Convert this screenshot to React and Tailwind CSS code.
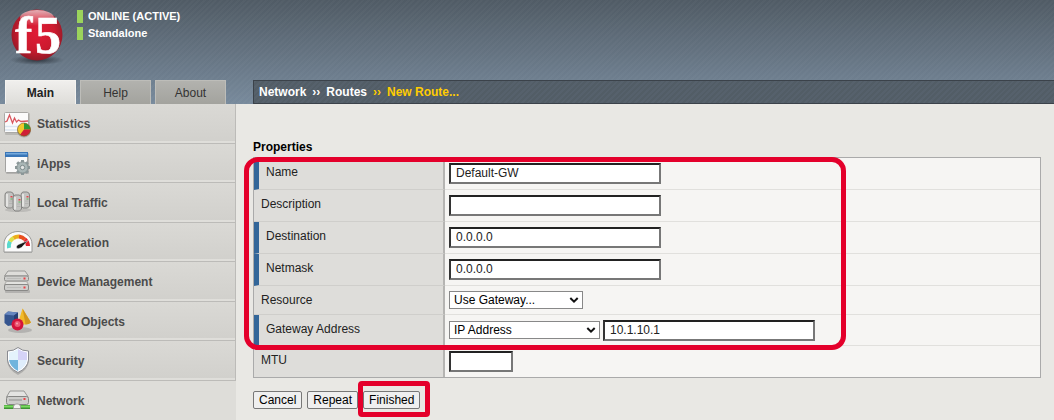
import React from "react";

const navItems = [
  { label: "Statistics", Icon: StatisticsIcon },
  { label: "iApps", Icon: AppsIcon },
  { label: "Local Traffic", Icon: TrafficIcon },
  { label: "Acceleration", Icon: GaugeIcon },
  { label: "Device Management", Icon: DeviceIcon },
  { label: "Shared Objects", Icon: ShapesIcon },
  { label: "Security", Icon: ShieldIcon },
  { label: "Network", Icon: NetworkIcon, active: true },
];

function IconFrame({ children }) {
  return (
    <svg className="h-[30px] w-[30px] shrink-0" viewBox="0 0 30 30" aria-hidden="true">
      {children}
    </svg>
  );
}

function StatisticsIcon() {
  return (
    <IconFrame>
      <rect x="2" y="4" width="25" height="22" rx="1" fill="#8b8b88" opacity=".35" />
      <rect x="1.5" y="3.5" width="24" height="20" rx="1" fill="#fbfbfb" stroke="#aaa9a6" />
      <path d="M2 17.500H25M2 21H25" stroke="#dbe6f1" strokeWidth="1.500" />
      <path d="M2 13 4 12 6.500 6 9.500 14 11.500 9 13.500 13 15.500 11 18 12.500 25 12" fill="none" stroke="#d9565e" strokeWidth="1.300" />
      <circle cx="21" cy="21.500" r="7" fill="#777" opacity=".45" />
      <circle cx="21" cy="20.500" r="6.500" fill="#f0c92b" />
      <path d="M21 20.500V14A6.500 6.500 0 0 1 27.500 20.500Z" fill="#2e9a35" />
      <path d="M21 20.500H27.500A6.500 6.500 0 0 1 17 25.700Z" fill="#cf1f36" />
      <circle cx="21" cy="20.500" r="6.500" fill="none" stroke="#7c5a20" strokeWidth=".6" />
    </IconFrame>
  );
}

function AppsIcon() {
  return (
    <IconFrame>
      <rect x="3" y="4" width="23" height="21" rx="1" fill="#777" opacity=".35" />
      <rect x="2.500" y="3.500" width="22" height="20" rx="1" fill="#fafafa" stroke="#a2a2a0" />
      <rect x="2" y="3" width="23" height="5" fill="#3976b8" />
      <rect x="3" y="4" width="21" height="1.500" fill="#76aadc" />
      <g transform="translate(19.500 18.500)">
        <g stroke="#8c9899" strokeWidth="3">
          <path d="M0-7.500V7.500" />
          <path d="M0-7.500V7.500" transform="rotate(45)" />
          <path d="M0-7.500V7.500" transform="rotate(90)" />
          <path d="M0-7.500V7.500" transform="rotate(135)" />
        </g>
        <circle r="5.600" fill="#a9b6b6" stroke="#879394" />
        <circle r="2.200" fill="#e3e5e4" stroke="#7d8a8b" />
      </g>
    </IconFrame>
  );
}

function Tower({ x, y }) {
  return (
    <g transform={`translate(${x} ${y})`}>
      <path d="M0 3Q0 .500 2 0H6Q8.500 .500 8.500 3V14L6.500 16H2L0 14Z" fill="#c3c3c1" stroke="#858583" />
      <path d="M2 2V14.500" stroke="#efefed" strokeWidth="1.500" />
      <path d="M4 9H7.500M4 11.500H7.500" stroke="#b4b4b2" />
      <rect x="5.500" y="4" width="2" height="1.500" fill="#e14a4c" />
      <rect x="5.500" y="6.500" width="2" height="1" fill="#58b954" />
    </g>
  );
}

function TrafficIcon() {
  return (
    <IconFrame>
      <ellipse cx="15" cy="22" rx="13" ry="2" fill="#777" opacity=".25" />
      <Tower x={2} y={4} />
      <Tower x={18} y={4} />
      <Tower x={10} y={7} />
    </IconFrame>
  );
}

function GaugeIcon() {
  return (
    <IconFrame>
      <path d="M1 25V18A14 14 0 0 1 29 18V25Z" fill="#777" opacity=".3" />
      <path d="M1 24V16C1 9 7 3.500 15 3.500S29 9 29 16V24Z" fill="#fafafa" stroke="#9a9a98" />
      <g fill="none" strokeWidth="4">
        <path d="M6 20A9.500 9.500 0 0 1 7 13.500" stroke="#59d9cd" />
        <path d="M7 13.500A9.500 9.500 0 0 1 10.500 10" stroke="#dbe04a" />
        <path d="M10.500 10A9.500 9.500 0 0 1 16 8.500" stroke="#edae1c" />
        <path d="M16 8.500A9.500 9.500 0 0 1 22 11.500" stroke="#e8501f" />
        <path d="M22 11.500A9.500 9.500 0 0 1 25 18" stroke="#e5202e" />
      </g>
      <path d="M25 12.500 18.500 19.500Q15.500 21.500 13.500 20Q12.500 18 15.500 16.500Z" fill="#171717" stroke="#fff" strokeWidth=".5" />
    </IconFrame>
  );
}

function DeviceIcon() {
  return (
    <IconFrame>
      <rect x="2" y="23" width="25" height="3" rx="1" fill="#777" opacity=".35" />
      <path d="M5 4H22L25.500 9H1.500Z" fill="#deddda" stroke="#9a9a98" />
      <rect x="1.500" y="9" width="24" height="5" rx="1.500" fill="#cececc" stroke="#898987" />
      <path d="M3.500 14.500H23.500L25.500 17.500H1.500Z" fill="#e2e2df" stroke="#aaa9a6" />
      <rect x="1.500" y="17.500" width="24" height="6" rx="1.500" fill="#cececc" stroke="#898987" />
      <path d="M4 11.500H18M4 20.500H18" stroke="#bcbcba" />
      <rect x="20.500" y="10.500" width="2" height="2" fill="#e94246" />
      <rect x="20.500" y="19.500" width="2" height="2" fill="#e94246" />
    </IconFrame>
  );
}

function ShapesIcon() {
  return (
    <IconFrame>
      <ellipse cx="17" cy="23" rx="12" ry="3" fill="#777" opacity=".35" />
      <path d="M1.500 7.500 5 4.500 15 5.500V17L5 19 1.500 16Z" fill="#35558f" />
      <path d="M1.500 7.500 5 4.500 15 5.500 11 8.500Z" fill="#6686bf" />
      <path d="M11 8.500 15 5.500V17L11 19Z" fill="#253f73" />
      <path d="M19.500 1.500 28 15.500Q25 19 15 16.500Z" fill="#f2ba29" />
      <path d="M19.500 1.500 28 15.500Q26 17.500 22.500 17.500Z" fill="#d3951c" />
      <circle cx="14.500" cy="17.500" r="6" fill="#d4143b" />
      <circle cx="14.500" cy="17" r="3" fill="#eb5873" />
      <circle cx="14" cy="16.500" r="1" fill="#f8a7b3" />
    </IconFrame>
  );
}

function ShieldIcon() {
  return (
    <IconFrame>
      <path d="M4 6Q11 6 15 2Q19 6 26 6V15Q25 24 15 29Q5 24 4 15Z" fill="#777" opacity=".4" />
      <path d="M4.500 5Q11 5 15 1.500Q19 5 25.500 5V14Q24.500 22 15 26.500Q5.500 22 4.500 14Z" fill="#fff" stroke="#898b91" />
      <path d="M6 6.500Q11 6 15 3V14H6Z" fill="#e4f3fc" />
      <path d="M15 3Q19 6 24 6.500V14H15Z" fill="#d5d3f7" />
      <path d="M6 14H15V25Q7 21 6 14Z" fill="#70b4dd" />
      <path d="M15 14H24Q23 21 15 25Z" fill="#dfedfb" />
    </IconFrame>
  );
}

function NetworkIcon() {
  return (
    <IconFrame>
      <path d="M7 5H21L25 11H3.500Z" fill="#e3e3e1" stroke="#999997" />
      <rect x="3.500" y="10.500" width="22" height="8" rx="2" fill="#cdcdcb" stroke="#858583" />
      <path d="M6 14H19" stroke="#8f8f8d" />
      <rect x="20.500" y="12" width="2" height="2" fill="#ed4447" />
      <path d="M1 21H27" stroke="#3e9134" strokeWidth="4" />
      <path d="M1 20.500H27" stroke="#7bdc61" strokeWidth="2" />
      <path d="M10.500 22.500V20L12.500 18H15.500L17.500 20V22.500Z" fill="#f2f2f0" stroke="#a0a09e" />
    </IconFrame>
  );
}

function Logo() {
  return (
    <svg className="h-[70px] w-[64px] shrink-0" viewBox="0 -8 64 70" role="img" aria-label="f5">
      <defs>
        <radialGradient id="ball" cx="50%" cy="45%" r="58%">
          <stop offset="0" stopColor="#e01c36" />
          <stop offset=".6" stopColor="#cc1a2e" />
          <stop offset="1" stopColor="#8a1a26" />
        </radialGradient>
        <linearGradient id="gloss" x1="0" y1="0" x2="0" y2="1">
          <stop offset="0" stopColor="#fff" stopOpacity=".65" />
          <stop offset="1" stopColor="#fff" stopOpacity="0" />
        </linearGradient>
        <radialGradient id="shade">
          <stop offset="0" stopColor="#20262d" stopOpacity=".8" />
          <stop offset="1" stopColor="#20262d" stopOpacity="0" />
        </radialGradient>
      </defs>
      <ellipse cx="32" cy="52" rx="27" ry="5" fill="url(#shade)" />
      <circle cx="32" cy="27" r="25.500" fill="url(#ball)" />
      <ellipse cx="32" cy="10" rx="17" ry="8" fill="url(#gloss)" />
      <g fill="#fff" fontFamily="Liberation Serif, serif" fontWeight="700">
        <text x="10" y="45" fontSize="52" stroke="#fff" strokeWidth=".6">f</text>
        <text x="30" y="45" fontSize="52" stroke="#fff" strokeWidth=".6">5</text>
      </g>
    </svg>
  );
}

function TextField({ id, value = "", size = "w-[212px]", label }) {
  return (
    <input
      id={id}
      aria-label={label}
      type="text"
      defaultValue={value}
      className={`${size} h-[21px] border-2 border-t-[#222] border-l-[#333] border-r-[#777] border-b-[#777] bg-white px-[5px] text-xs text-[#222] outline-none`}
    />
  );
}

function SelectField({ id, option, size }) {
  return (
    <div className={`relative ${size}`}>
      <select id={id} className="block h-[18px] w-full appearance-none border border-[#888] bg-white pl-1 pr-5 text-xs leading-4 text-black outline-none">
        <option>{option}</option>
      </select>
      <svg className="pointer-events-none absolute top-[5px] right-1 h-2 w-2.5" viewBox="0 0 10 8" aria-hidden="true">
        <path d="M1.300 2 5 5.700 8.700 2" fill="none" stroke="#111" strokeWidth="2" />
      </svg>
    </div>
  );
}

function Row({ id, label, required, last, height = "", children }) {
  return (
    <tr className={height}>
      <th
        scope="row"
        className={`w-[191px] border-r-2 border-r-[#b5b4b2] bg-[#dedddA] p-0 pl-[7px] text-left align-top font-normal ${required ? "border-l-[5px] border-l-[#336699]" : ""} ${last ? "" : "border-b border-b-[#cfcecb]"}`}
      >
        <label htmlFor={id} className="block pt-1.5 leading-4">{label}</label>
      </th>
      <td className={`py-0 pr-2 pl-1 align-middle ${last ? "" : "border-b border-[#e1e0dd]"}`}>
        <div className="flex items-center gap-[3px]">{children}</div>
      </td>
    </tr>
  );
}

function FormButton({ children }) {
  return (
    <button type="button" className="block h-[18px] rounded-[2px] border border-[#777] bg-[#efefef] px-[5px] text-xs leading-4 text-black">
      {children}
    </button>
  );
}

export default function App() {
  return (
    <div className="min-h-screen bg-[#e9e8e4] text-xs text-[#222] [font-family:'Liberation_Sans',Arial,sans-serif]">
      <header className="flex h-[104px] flex-col justify-between bg-[repeating-linear-gradient(135deg,rgba(255,255,255,0.025)_0px,rgba(255,255,255,0.025)_2px,transparent_2px,transparent_4px),linear-gradient(#505b65,#788a9c)]">
        <div className="flex pl-[5px]">
          <Logo />
          <div className="flex flex-col gap-1 pt-2.5 pl-2 text-[11px] leading-[13px] font-bold text-white">
            <div className="border-l-[6px] border-[#9bd45c] pl-[5px]">ONLINE (ACTIVE)</div>
            <div className="border-l-[6px] border-[#9bd45c] pl-[5px]">Standalone</div>
          </div>
        </div>
        <div className="flex items-end">
          <div className="flex w-[253px] shrink-0 gap-1 pl-[5px]">
            <button type="button" className="h-6 w-[71px] border border-b-0 border-[#f4f3f0] bg-linear-to-b from-[#f0efed] to-[#deddd9] font-bold">Main</button>
            <button type="button" className="h-6 w-[71px] border border-b-0 border-[#bdbdb9] bg-linear-to-b from-[#b2b2ae] to-[#a3a39e] text-[#333]">Help</button>
            <button type="button" className="h-6 w-[71px] border border-b-0 border-[#bdbdb9] bg-linear-to-b from-[#b2b2ae] to-[#a3a39e] text-[#333]">About</button>
          </div>
          <nav aria-label="Breadcrumb" className="flex h-6 flex-1 items-center gap-1.5 border border-r-0 border-[#3b424a] bg-[repeating-linear-gradient(135deg,#56616c_0px,#56616c_2px,#525d66_2px,#525d66_4px)] pl-[5px] font-bold text-white">
            <a href="#network">Network</a>
            <span>››</span>
            <a href="#routes">Routes</a>
            <span className="text-[#ffcc00]">››</span>
            <a href="#new-route" className="text-[#ffcc00]">New Route...</a>
          </nav>
        </div>
      </header>

      <div className="flex">
        <nav aria-label="Main" className="grid h-[316px] w-[236px] shrink-0 grid-rows-8">
          {navItems.map(({ label, Icon, active }) => (
            <a
              key={label}
              href={`#${label}`}
              className={
                active
                  ? "flex items-center gap-1 bg-[#deddd9] pt-0.5 pl-[3px] font-bold text-[#4b4b4b]"
                  : "flex items-center gap-1 border-r border-b border-[#bcbbb8] bg-linear-to-b from-[#dad9d5] to-[#d1d0cc] pt-0.5 pl-[3px] font-bold text-[#4b4b4b] shadow-[inset_0_-2px_0_#dfdeda]"
              }
            >
              <Icon />
              <span>{label}</span>
            </a>
          ))}
        </nav>

        <main className="min-w-0 flex-1 pt-[35px] pr-[13px] pl-[17px]">
          <h1 className="mb-0.5 leading-4 font-bold text-black">Properties</h1>
          <form>
            <div className="relative">
              <table className="h-[221px] w-full border-separate border-spacing-0 border border-[#aaa] bg-[#f6f5f3]">
                <tbody>
                  <Row id="name" label="Name" required>
                    <TextField id="name" value="Default-GW" />
                  </Row>
                  <Row id="description" label="Description">
                    <TextField id="description" />
                  </Row>
                  <Row id="destination" label="Destination" required>
                    <TextField id="destination" value="0.0.0.0" />
                  </Row>
                  <Row id="netmask" label="Netmask" required>
                    <TextField id="netmask" value="0.0.0.0" />
                  </Row>
                  <Row id="resource" label="Resource" height="h-[29px]">
                    <SelectField id="resource" option="Use Gateway..." size="w-[134px]" />
                  </Row>
                  <Row id="gateway" label="Gateway Address" required>
                    <SelectField id="gateway" option="IP Address" size="w-[151px]" />
                    <TextField id="gateway-ip" label="Gateway IP" value="10.1.10.1" />
                  </Row>
                  <Row id="mtu" label="MTU" last>
                    <TextField id="mtu" size="w-16" />
                  </Row>
                </tbody>
              </table>
              <div className="pointer-events-none absolute top-0 -left-[9px] h-[193px] w-[602px] rounded-[14px] border-5 border-[#e4002b]" />
            </div>
            <div className="mt-[13px] flex gap-[5px]">
              <FormButton>Cancel</FormButton>
              <FormButton>Repeat</FormButton>
              <div className="relative">
                <FormButton>Finished</FormButton>
                <div className="pointer-events-none absolute -top-2.5 -right-2.5 -bottom-2 -left-[5px] rounded-[4px] border-5 border-[#e4002b]" />
              </div>
            </div>
          </form>
        </main>
      </div>
    </div>
  );
}
